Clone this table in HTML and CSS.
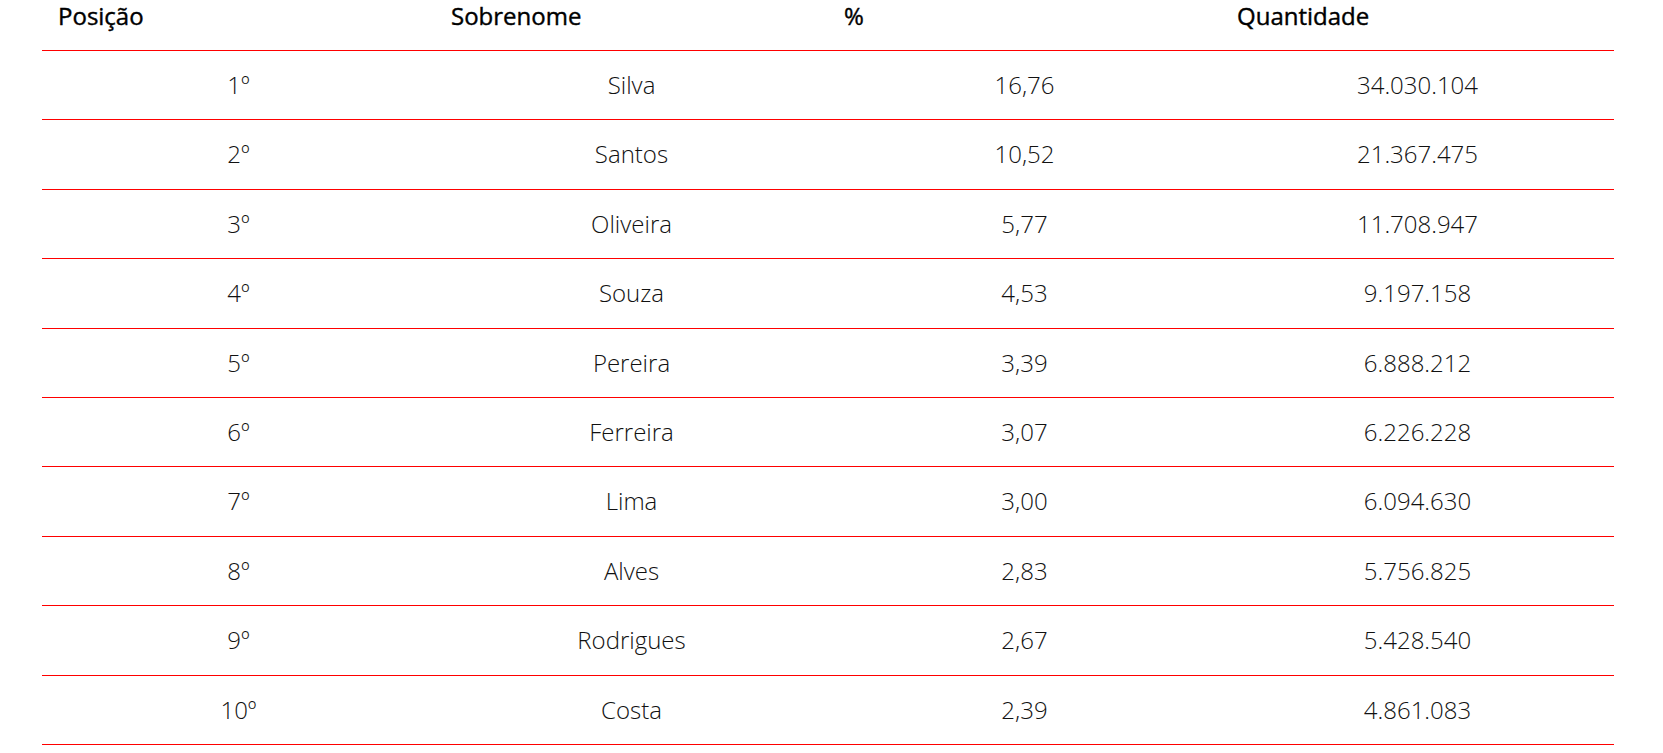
FILE: index.html
```html
<!DOCTYPE html>
<html lang="pt-BR">
<head>
<meta charset="utf-8">
<title>Sobrenomes mais comuns</title>
<link rel="stylesheet" href="styles.css">
</head>
<body>
<table class="ranking">
  <thead>
    <tr>
      <th>Posição</th>
      <th>Sobrenome</th>
      <th>%</th>
      <th>Quantidade</th>
    </tr>
  </thead>
  <tbody>
    <tr><td>1º</td><td>Silva</td><td>16,76</td><td>34.030.104</td></tr>
    <tr><td>2º</td><td>Santos</td><td>10,52</td><td>21.367.475</td></tr>
    <tr><td>3º</td><td>Oliveira</td><td>5,77</td><td>11.708.947</td></tr>
    <tr><td>4º</td><td>Souza</td><td>4,53</td><td>9.197.158</td></tr>
    <tr><td>5º</td><td>Pereira</td><td>3,39</td><td>6.888.212</td></tr>
    <tr><td>6º</td><td>Ferreira</td><td>3,07</td><td>6.226.228</td></tr>
    <tr><td>7º</td><td>Lima</td><td>3,00</td><td>6.094.630</td></tr>
    <tr><td>8º</td><td>Alves</td><td>2,83</td><td>5.756.825</td></tr>
    <tr><td>9º</td><td>Rodrigues</td><td>2,67</td><td>5.428.540</td></tr>
    <tr><td>10º</td><td>Costa</td><td>2,39</td><td>4.861.083</td></tr>
  </tbody>
</table>
</body>
</html>
```

FILE: styles.css
```css
html, body {
  margin: 0;
  padding: 0;
  background: #ffffff;
}

body {
  font-family: "Open Sans", "Noto Sans", sans-serif;
  font-size: 24px;
}

.ranking {
  margin-left: 42px;
  width: 1572px;
  border-collapse: collapse;
  table-layout: fixed;
}

.ranking th {
  text-align: left;
  font-weight: 500;
  color: #000000;
  -webkit-text-stroke: 0.4px #000000;
  line-height: 32px;
  padding: 0 16px 18px 16px;
  border-bottom: 1px solid #ff0000;
}

.ranking td {
  text-align: center;
  font-weight: 300;
  color: #111111;
  line-height: 32.4px;
  padding: 18px 16px;
  border-bottom: 1px solid #ff0000;
}
```
